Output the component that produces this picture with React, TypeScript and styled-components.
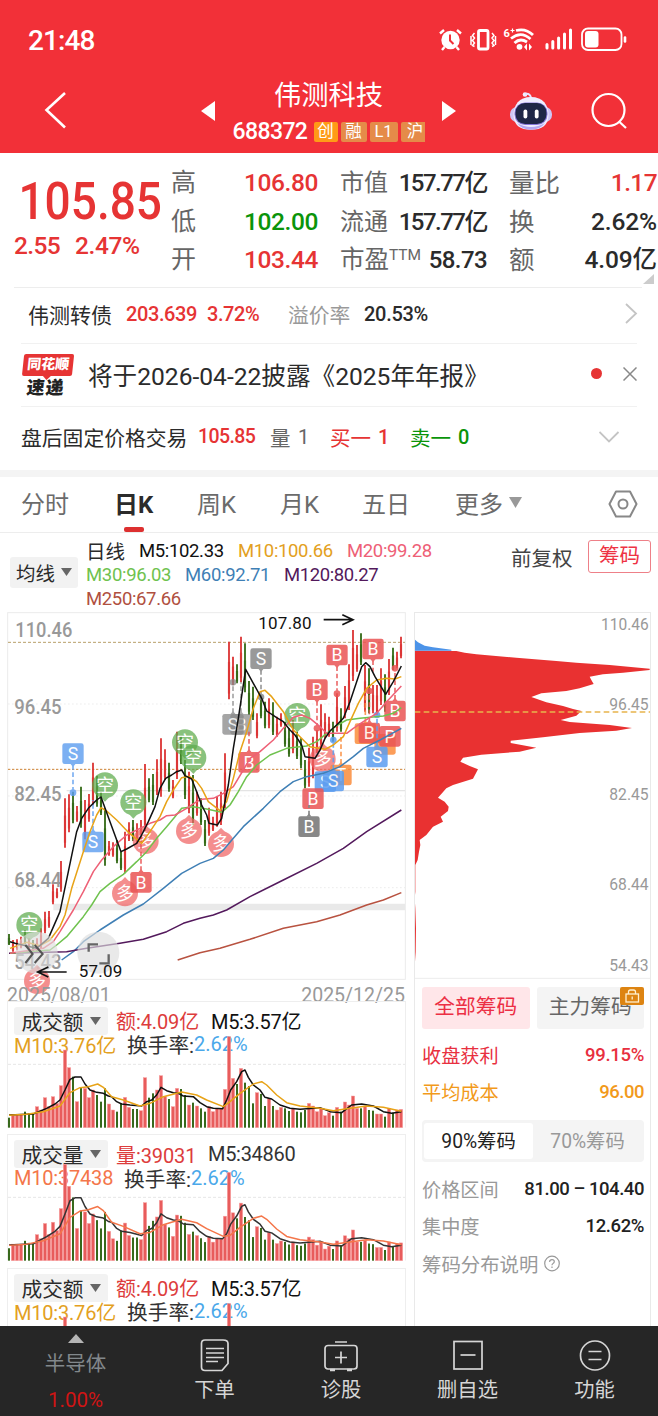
import React from "react";
import styled, { createGlobalStyle } from "styled-components";

const GlobalStyle = createGlobalStyle`
  * {
    box-sizing: border-box;
  }

  body {
    margin: 0;
    background: #fff;
    font-family: Roboto, "Noto Sans CJK SC", sans-serif;
  }

  svg {
    display: block;
    flex-shrink: 0;
  }
`;

const RED = "#e63434";
const GREEN = "#0a940a";
const INK = "#2b2b2b";
const GREY = "#999";

const Page = styled.div`
  width: 658px;
  height: 1416px;
  overflow: hidden;
  display: flex;
  flex-direction: column;
  background: #fff;
`;

const Header = styled.header`
  height: 153px;
  flex-shrink: 0;
  background: #f23038;
  color: #fff;
`;

const StatusBar = styled.div`
  height: 80px;
  padding: 0 31px 0 28px;
  display: flex;
  align-items: center;
  justify-content: space-between;
`;

const TitleBar = styled.div`
  height: 62px;
  display: flex;
  align-items: center;
`;

const BackButton = styled.div`
  width: 201px;
  padding-left: 44px;
`;

const TitleStack = styled.div`
  width: 227px;
  display: flex;
  flex-direction: column;
  align-items: center;
  gap: 10px;
`;

const Title = styled.div`
  padding-top: 1px;
  font-size: 27.3px;
  line-height: 30px;
`;

const CodeRow = styled.div`
  width: 192px;
  height: 22px;
  display: flex;
  align-items: center;
`;

const TagStrip = styled.div`
  width: 111px;
  display: flex;
  gap: 3px;
  overflow: hidden;
`;

const Tag = styled.span<{ $w: number; $bright?: boolean }>`
  width: ${(p) => p.$w}px;
  height: 20px;
  flex-shrink: 0;
  border-radius: 2px;
  background: ${(p) => (p.$bright ? "#ff9b17" : "#e58b49")};
  font-size: 16.5px;
  line-height: 19px;
  text-align: center;
  white-space: nowrap;
`;

const HeaderIcon = styled.div<{ $gap: number }>`
  margin-left: ${(p) => p.$gap}px;
`;

/* one run of text; $w fixes the space it takes in its row */
const Text = styled.span<{
  $size: number;
  $color?: string;
  $w?: number;
  $weight?: number;
  $track?: number;
}>`
  display: inline-block;
  flex-shrink: 0;
  white-space: nowrap;
  font-size: ${(p) => p.$size}px;
  color: ${(p) => p.$color || "inherit"};
  width: ${(p) => (p.$w ? p.$w + "px" : "auto")};
  font-weight: ${(p) => p.$weight || 400};
  letter-spacing: ${(p) => p.$track || 0}px;
`;

const Quote = styled.section`
  height: 134px;
  display: flex;
  flex-shrink: 0;
  position: relative;
`;

const PriceColumn = styled.div`
  width: 171px;
  padding: 27px 0 0 14px;
  color: ${RED};
`;

const Price = styled.div`
  width: 165px;
  padding-left: 5px;
  font-size: 52px;
  font-weight: 500;
  line-height: 44px;
  transform: scaleX(0.885);
  transform-origin: left;
`;

const Change = styled.div`
  margin-top: 8px;
  display: flex;
  line-height: 28px;
`;

const StatGroup = styled.div`
  width: 147px;
  margin-right: 22px;
  padding-top: 11px;

  &:last-of-type {
    margin-right: 0;
    width: 148px;
  }
`;

const Stat = styled.div`
  height: 38.5px;
  display: flex;
  align-items: center;
  justify-content: space-between;
  line-height: 38px;

  sup {
    font-size: 15.5px;
    line-height: 0;
    vertical-align: 8px;
  }
`;

const Fold = styled.svg`
  position: absolute;
  right: 4px;
  bottom: 3px;
`;

const InfoRow = styled.div<{ $h: number; $inset: number; $pad: number }>`
  height: ${(p) => p.$h}px;
  flex-shrink: 0;
  margin: 0 ${(p) => (p.$inset === 14 ? 16 : 21)}px 0 ${(p) => p.$inset}px;
  padding: 0 0 3px ${(p) => p.$pad}px;
  border-top: 1px solid #ededed;
  display: flex;
  align-items: center;
`;

const PlainRow = styled(InfoRow)`
  border-top-color: #f1f1f1;
`;

const Spacer = styled.div`
  flex: 1;
`;

const Badge = styled.div`
  width: 50px;
  margin: 2px 16px 0 1px;
  transform: skewX(-6deg);
  text-align: center;
  font-weight: 900;
`;

const BadgeTop = styled.div`
  height: 22px;
  position: relative;
  border-radius: 2px;
  background: ${RED};
  color: #fff;
  font-size: 14px;
  line-height: 21px;

  &::after {
    content: "";
    position: absolute;
    left: 21px;
    top: 22px;
    border: 4px solid transparent;
    border-top-color: ${RED};
    border-bottom: 0;
  }
`;

const BadgeBottom = styled.div`
  height: 20px;
  color: #222;
  font-size: 18px;
  line-height: 23px;
  letter-spacing: 1px;
`;

const Dot = styled.div`
  width: 11px;
  height: 11px;
  margin-right: 21px;
  border-radius: 50%;
  background: ${RED};
`;

const Band = styled.div`
  height: 7px;
  flex-shrink: 0;
  background: #f4f4f4;
`;

const Tabs = styled.nav`
  height: 56px;
  flex-shrink: 0;
  padding-left: 21px;
  border-bottom: 1px solid #ededed;
  display: flex;
  align-items: center;
  color: #666;
`;

const Tab = styled.div<{ $w: number; $active?: boolean }>`
  width: ${(p) => p.$w}px;
  height: 55px;
  padding-bottom: 3px;
  position: relative;
  display: flex;
  align-items: center;
  gap: 6px;
  font-size: 24px;
  white-space: nowrap;
  color: ${(p) => (p.$active ? INK : "#6b6b6b")};
  font-weight: ${(p) => (p.$active ? 700 : 400)};

  &::after {
    content: "";
    display: ${(p) => (p.$active ? "block" : "none")};
    position: absolute;
    left: 10px;
    bottom: 0;
    width: 20px;
    height: 5px;
    border-radius: 2px;
    background: #dd3030;
  }
`;

const Legend = styled.div`
  height: 79px;
  flex-shrink: 0;
  padding: 5px 7px 0 10px;
  display: flex;
  align-items: flex-start;
`;

const Pill = styled.div<{ $w: number; $h: number; $size: number }>`
  width: ${(p) => p.$w}px;
  height: ${(p) => p.$h}px;
  flex-shrink: 0;
  display: flex;
  align-items: center;
  justify-content: center;
  gap: 6px;
  border-radius: 3px;
  background: #f2f2f2;
  color: ${INK};
  font-size: ${(p) => p.$size}px;
`;

const MaPill = styled(Pill)`
  margin: 19px 8px 0 0;
`;

const MaLines = styled.div`
  width: 425px;
  padding-top: 1px;
`;

const MaLine = styled.div`
  height: 24px;
  display: flex;
  align-items: center;
`;

const ChipButton = styled.div`
  width: 63px;
  height: 33px;
  margin-top: 2px;
  border: 1px solid #ee8088;
  border-radius: 3px;
  color: #ee3344;
  font-size: 20.5px;
  line-height: 30px;
  text-align: center;
`;

const Adjust = styled.div`
  width: 77px;
  margin-top: 6px;
  font-size: 20.5px;
  line-height: 30px;
  color: #444;
`;

const Body = styled.main`
  height: 714px;
  flex-shrink: 0;
  display: flex;
  overflow: hidden;
`;

const ChartColumn = styled.div`
  width: 414px;
`;

const Dates = styled.div`
  height: 19px;
  margin-top: -14px;
  padding: 0 9px 0 7px;
  display: flex;
  justify-content: space-between;
  line-height: 27px;
`;

const VolumePanel = styled.section`
  width: 398.5px;
  height: 127px;
  margin: 0 0 6.5px 7px;
  position: relative;
  border: 1px solid #eee;
  border-bottom-color: transparent;
`;

const VolumeChart = styled.svg`
  position: absolute;
  left: -8px;
  top: 0;
`;

const VolumeHead = styled.div`
  padding: 5px 0 0 6px;
`;

const VolumeLine = styled.div`
  display: flex;
  align-items: center;
  height: 28px;

  & + & {
    height: 19px;
  }
`;

const ChipColumn = styled.aside`
  width: 237px;
  border: 1px solid #e9e9e9;
  border-bottom: 0;
`;

const ChipPanel = styled.div`
  padding: 7px 6px 0 7px;
`;

const ButtonPair = styled.div`
  display: flex;
  justify-content: space-between;
`;

const ChipTab = styled.div<{ $active?: boolean }>`
  width: 107.5px;
  height: 42px;
  position: relative;
  border-radius: 3px;
  background: ${(p) => (p.$active ? "#ffe6e9" : "#f4f4f4")};
  color: ${(p) => (p.$active ? "#ec2f44" : "#666")};
  font-size: 20.7px;
  line-height: 41px;
  text-align: center;
`;

const Lock = styled.svg`
  position: absolute;
  right: 0;
  top: 0;
`;

const DataRow = styled.div`
  height: 37px;
  display: flex;
  align-items: center;
  justify-content: space-between;
`;

const DataBlock = styled.div<{ $top: number }>`
  margin-top: ${(p) => p.$top}px;
`;

const Segment = styled.div`
  height: 42px;
  margin-top: 9px;
  padding: 3px 2px;
  display: flex;
  border-radius: 4px;
  background: #f4f4f4;
`;

const SegmentItem = styled.div<{ $active?: boolean }>`
  flex: 1;
  border-radius: 3px;
  background: ${(p) => (p.$active ? "#fff" : "transparent")};
  color: ${(p) => (p.$active ? "#222" : GREY)};
  font-size: 19.3px;
  line-height: 37px;
  text-align: center;
`;

const BottomBar = styled.footer`
  height: 90px;
  flex-shrink: 0;
  display: flex;
  background: #262626;
  color: #d6d6d6;
`;

const NavItem = styled.div<{ $w: number }>`
  width: ${(p) => p.$w}px;
  padding-top: 13px;
  display: flex;
  flex-direction: column;
  align-items: center;
  font-size: 20.3px;
  line-height: 30px;

  svg {
    margin-bottom: 3px;
  }
`;

const Sector = styled.div`
  width: 151px;
  padding-top: 8px;
  display: flex;
  flex-direction: column;
  align-items: center;
  color: #82888c;
  line-height: 30px;

  svg {
    margin-bottom: 6px;
  }
`;

const SectorChange = styled.div`
  margin-top: 6px;
  color: #d01414;
  font-size: 20.5px;
`;

/* ---------- chart data, three units to a pixel ---------- */

type Candle = [number, number, boolean?];

// [high, low, falling]
const candles: Candle[] = [
  [987, 1020, true], [1005, 1040], [1003, 1036], [995, 1030], [975, 1018, true],
  [1000, 1040], [1005, 1040, true], [1000, 1040], [970, 1030], [920, 985],
  [918, 968], [838, 898], [850, 880], [768, 860], [580, 728],
  [568, 682], [560, 655, true], [603, 650], [545, 668, true], [585, 703],
  [567, 650], [473, 600], [512, 605, true], [562, 630, true], [610, 782, true],
  [708, 752], [712, 755], [705, 775, true], [740, 795, true], [680, 805],
  [652, 708], [645, 708, true], [655, 715], [645, 720], [477, 680],
  [520, 592, true], [507, 600, true], [463, 570], [400, 575], [433, 525],
  [473, 560, true], [525, 580], [380, 522], [395, 477, true], [465, 582, true],
  [500, 625], [510, 660, true], [560, 632], [580, 660, true], [645, 723, true],
  [608, 692], [635, 678], [575, 665], [560, 660], [445, 610],
  [110, 283], [155, 240], [178, 235, true], [95, 232], [115, 262, true],
  [228, 330, true], [245, 345, true], [325, 400], [270, 340, true], [290, 370, true],
  [280, 370], [292, 390, true], [335, 395], [325, 365], [350, 425, true],
  [370, 455, true], [345, 445], [380, 462, true], [400, 490, true], [465, 550, true],
  [428, 545], [395, 520], [375, 450], [298, 430], [325, 400],
  [335, 395], [350, 410, true], [265, 380], [310, 380, true], [243, 340],
  [178, 315], [75, 228], [120, 200], [85, 180, true], [180, 320],
  [190, 325, true], [240, 325], [240, 330], [190, 300], [208, 320, true],
  [162, 270], [128, 195, true], [140, 190], [95, 160],
];

const averages = [
  { color: "#3f7fb5", pts: "185,1065 220,1040 250,1010 300,975 370,930 430,897 490,850 545,805 600,775 640,760 670,735 700,700 730,665 790,610 840,560 880,530 920,515 970,505 1020,485 1060,455 1090,430 1140,405 1204,370" },
  { color: "#53195c", pts: "27,1045 200,1040 260,1030 360,1015 430,1003 500,980 550,955 600,940 640,930 680,915 750,875 850,825 950,775 1030,730 1100,680 1204,615" },
  { color: "#b85240", pts: "533,1065 600,1043 660,1030 750,1003 850,970 950,950 1020,930 1100,900 1150,885 1204,863" },
  { color: "#6fc24e", pts: "30,1045 150,1035 170,1020 200,995 225,965 250,935 275,900 300,860 330,835 370,808 410,770 440,740 470,700 500,665 525,635 545,610 580,605 620,612 665,622 690,600 715,560 740,515 770,480 810,450 860,430 920,423 950,410 980,385 1010,362 1040,345 1080,340 1150,333 1180,325 1204,308" },
  { color: "#ee6076", pts: "30,1045 130,1030 160,1010 180,980 220,915 250,860 280,800 305,765 340,725 380,690 420,670 450,655 480,645 500,632 525,630 560,610 590,590 605,583 640,580 670,565 700,545 730,495 750,460 780,440 820,405 850,370 880,337 905,330 930,340 960,365 980,385 1010,385 1040,385 1060,370 1090,350 1130,325 1160,290 1204,243" },
  { color: "#e8a317", pts: "30,1030 80,1012 120,1022 150,1005 180,965 195,930 215,850 250,740 270,680 290,630 303,608 320,618 350,645 385,682 425,715 450,680 480,635 500,590 520,555 545,518 568,514 590,530 605,550 625,590 660,617 680,590 700,520 720,440 740,380 760,310 780,260 795,256 815,275 850,320 880,375 930,425 975,433 1000,420 1030,395 1050,350 1075,295 1100,250 1130,225 1160,220 1185,222 1204,215" },
  { color: "#111", pts: "30,1010 45,1015 110,1030 145,1000 180,920 205,800 230,680 245,640 265,610 290,585 303,576 330,650 363,740 380,732 410,715 425,690 445,650 465,605 480,550 497,520 515,510 530,500 545,495 555,512 575,522 590,560 605,600 620,630 627,655 652,660 665,640 685,540 700,430 715,340 737,193 760,235 785,280 800,318 830,338 850,350 870,375 885,390 905,420 915,455 945,460 960,435 975,400 990,378 1010,360 1030,340 1050,290 1070,230 1085,185 1097,173 1110,185 1125,215 1157,268 1180,230 1204,183" },
];

const chipProfile =
  "15,137 140,138 165,143 200,148 320,158 440,168 500,173 600,180 720,191 720,195 640,203 580,208 540,215 545,225 552,237 510,250 470,258 395,265 365,276 410,292 460,303 490,312 515,318 500,332 453,345 480,351 600,360 667,369 620,377 510,384 400,397 303,407 303,414 380,428 330,440 215,449 160,458 152,470 180,483 205,493 190,521 130,540 110,550 85,578 105,590 117,605 115,618 93,635 100,650 70,665 50,690 30,705 32,720 28,740 24,765 17,780 17,860 15,880 17,910 19,970 18,1040 15,1085";

// height above the base line for each day
const volumes = [
  30, 40, 40, 40, 48, 43, 41, 63, 53, 90, 63, 93, 73, 126, 233, 180, 153, 78, 121, 118,
  90, 113, 98, 78, 118, 71, 53, 48, 73, 91, 61, 56, 56, 51, 150, 90, 103, 113, 156, 93,
  86, 63, 118, 116, 98, 68, 75, 65, 58, 48, 63, 48, 58, 56, 115, 273, 148, 131, 178, 135,
  125, 73, 105, 101, 65, 88, 65, 53, 61, 58, 50, 58, 48, 46, 53, 73, 65, 48, 58, 36,
  45, 36, 61, 48, 77, 68, 95, 58, 58, 63, 53, 51, 41, 41, 33, 58, 45, 53, 55,
];
const volumeFalls = [
  0, 4, 5, 6, 16, 18, 22, 23, 24, 27, 28, 31, 32, 35, 36, 40, 43, 44, 46, 48, 49, 57, 59,
  60, 61, 63, 64, 66, 69, 70, 72, 73, 74, 81, 83, 88, 90, 91, 94, 96,
];
const volumeFast: number[][] = [
  [27, 345], [100, 342], [140, 325], [165, 312], [180, 300], [195, 270], [210, 238], [225, 231],
  [243, 231], [255, 252], [270, 270], [290, 277], [310, 280], [325, 288], [335, 290], [350, 305],
  [365, 312], [390, 315], [425, 318], [440, 305], [455, 300], [470, 285], [483, 262], [500, 272],
  [520, 278], [535, 280], [550, 288], [580, 290], [600, 308], [620, 320], [640, 325], [668, 326],
  [680, 300], [692, 270], [710, 245], [725, 215], [735, 210], [745, 232], [760, 255], [780, 270],
  [795, 292], [815, 297], [840, 315], [870, 325], [900, 328], [960, 323], [990, 335], [1025, 338],
  [1055, 315], [1085, 312], [1120, 318], [1150, 335], [1175, 340], [1204, 335],
];
const volumeSlow: number[][] = [
  [27, 346], [80, 343], [130, 335], [180, 318], [210, 278], [240, 263], [265, 260], [293, 252],
  [310, 262], [335, 290], [370, 300], [420, 318], [450, 310], [490, 290], [545, 276], [590, 285],
  [620, 300], [670, 320], [690, 305], [720, 280], [760, 252], [785, 245], [800, 255], [830, 285],
  [860, 308], [900, 318], [960, 325], [1000, 332], [1050, 325], [1100, 318], [1150, 322], [1204, 334],
];

/* ---------- small drawings ---------- */

const Caret = ({ w = 11, h = 8, color = "#666" }) => (
  <svg width={w} height={h} viewBox="0 0 10 8" preserveAspectRatio="none">
    <path d="M0 0H10L5 8Z" fill={color} />
  </svg>
);

const StatusIcons = () => (
  <svg width="190" height="28" viewBox="437 26 190 28" fill="none" stroke="#fff">
    <circle cx="450.5" cy="40" r="9.2" fill="#fff" stroke="none" />
    <path d="M450 34.5V40.5L453.5 44" stroke="#f23038" strokeWidth="2" />
    <path d="M440 33.500L444 30M461 33.500L457 30M444.500 47L442 50M456.500 47L459 50" strokeWidth="2.4" />
    <rect x="478.500" y="30.500" width="9.500" height="18.500" rx="1.500" strokeWidth="2.800" />
    <path d="M474.500 33l-2 2.500 2 2.500-2 2.500 2 2.500-2 2.500 2 1M492 33l2 2.500-2 2.500 2 2.500-2 2.500 2 2.500-2 1M471 36v9M495.500 36v9" strokeWidth="1.500" />
    <text x="503.500" y="37" fontSize="11" fontWeight="700" fill="#fff" stroke="none">6</text>
    <path d="M510.500 30.500h4M512.500 28.500v4" strokeWidth="1.200" />
    <path d="M516 30.500Q526 28 533 35M511 38.500Q521 30.500 530.500 39M514.500 43Q520 37.500 527 42" strokeWidth="2.800" />
    <circle cx="519.500" cy="46.800" r="2.900" fill="#fff" stroke="none" />
    <path d="M527 43.500l-3 3.500 3 3.500zM529 43.500l3 3.500-3 3.500z" fill="#fff" stroke="none" />
    <path d="M547 44.500V48M552.800 41.500V48M558.600 38V48M564.500 34V48M570.500 30V48" strokeWidth="3" strokeLinecap="round" />
    <rect x="582" y="28.500" width="39.500" height="21.500" rx="6" strokeWidth="1.800" />
    <rect x="585" y="31" width="13.500" height="16.500" rx="3" fill="#fff" stroke="none" />
    <path d="M625 37.500v4" strokeWidth="2.600" strokeLinecap="round" />
  </svg>
);

const Robot = () => (
  <svg width="42" height="40" viewBox="0 0 42 40">
    <circle cx="15" cy="3.500" r="2.300" fill="#f1efff" />
    <path d="M15 3Q21 2 21 8" stroke="#e8e4ff" strokeWidth="2" fill="none" />
    <rect x="0" y="16" width="42" height="15" rx="7" fill="#cfc6f6" />
    <path d="M21 6C33 6 38.500 14 38.500 24C38.500 34 32 38.800 21 38.800C10 38.800 3.500 34 3.500 24C3.500 14 9 6 21 6Z" fill="#efedff" />
    <path d="M7 32Q21 40 35 32Q30 38.800 21 38.800Q12 38.800 7 32Z" fill="#b3a8f2" />
    <rect x="4.500" y="11.500" width="33" height="22.500" rx="10.500" fill="#8577d8" />
    <rect x="5.500" y="12" width="31" height="21" rx="9.500" fill="#1f2747" />
    <rect x="13.500" y="18.500" width="3.800" height="9" rx="1.900" fill="#fff" />
    <rect x="24.800" y="18.500" width="3.800" height="9" rx="1.900" fill="#fff" />
  </svg>
);

const markerColors = { blue: "#5c9df0", red: "#ea5454", grey: "#888", orange: "#fb8c3c" };

type MarkProps = {
  x: number;
  y: number;
  label?: string;
  tone: keyof typeof markerColors;
  to?: number;
  dot?: boolean;
  o?: number;
};

// buy / sell square with an optional dashed stem towards its candle
const Mark = ({ x, y, label, tone, to, dot, o = 0.85 }: MarkProps) => {
  const color = markerColors[tone];
  const side = to && to < y ? -1 : 1;
  return (
    <g opacity={o}>
      {to && (
        <>
          <path d={`M${x} ${y + side * 34}V${to}`} stroke={color} strokeWidth="5" strokeDasharray="14 8" />
          <path d={`M${x - 8} ${y + side * 30}h16l-8 ${side * 10}z`} fill={color} />
        </>
      )}
      {dot && to && <circle cx={x} cy={to} r="10" fill={color} />}
      <rect x={x - 32} y={y - 31} width="64" height="62" rx="7" fill={color} />
      <text x={x} y={y + 19} fontSize="53" fill="#fff" textAnchor="middle">{label}</text>
    </g>
  );
};

const Balloon = ({ x, y, up }: { x: number; y: number; up?: boolean }) => (
  <g opacity="0.72">
    <circle cx={x} cy={y} r="39" fill={up ? "#f06464" : "#5dab4c"} />
    <path d={up ? `M${x - 13} ${y - 35}h26l-13 -14z` : `M${x - 13} ${y + 35}h26l-13 14z`} fill={up ? "#f06464" : "#5dab4c"} />
    <text x={x} y={y + 19} fontSize="54" fill="#fff" textAnchor="middle">{up ? "多" : "空"}</text>
  </g>
);

const PriceChart = () => (
  <svg width="414" height="384" viewBox="0 21 1242 1152" fill="none">
    <rect x="23" y="23" width="1193" height="1100" stroke="#ebebeb" strokeWidth="3" />
    <path d="M24 297H1215M24 573H1215M24 848H1215" stroke="#ededed" strokeWidth="3" strokeDasharray="5 7" />
    <path d="M200 557H1215" stroke="#e4e4e4" strokeWidth="4" />
    <path d="M160 906H1215" stroke="#e9e9e9" strokeWidth="19" />
    <path d="M24 112H1215" stroke="#b9a06a" strokeWidth="3" strokeDasharray="9 6" />
    <path d="M24 493H1215" stroke="#cd8234" strokeWidth="3" strokeDasharray="7 5" />
    <g fill="#999" fontSize="59" fontWeight="500">
      <text x="46" y="97" textLength="171" lengthAdjust="spacingAndGlyphs">110.46</text>
      <text x="43" y="327" textLength="142" lengthAdjust="spacingAndGlyphs">96.45</text>
      <text x="43" y="588" textLength="142" lengthAdjust="spacingAndGlyphs">82.45</text>
      <text x="43" y="847" textLength="142" lengthAdjust="spacingAndGlyphs">68.44</text>
      <text x="43" y="1092" textLength="142" lengthAdjust="spacingAndGlyphs">54.43</text>
    </g>
    {candles.map(([high, low, falling], i) => (
      <g key={i} stroke={falling ? "#356b18" : "#dc3636"}>
        <path d={`M${27 + i * 12} ${high}V${low}`} strokeWidth="5.5" />
        <path d={`M${27 + i * 12} ${high + (low - high) * 0.35}V${low - (low - high) * 0.1}`} strokeWidth="6.5" />
      </g>
    ))}
    <Balloon x={88} y={960} />
    <Balloon x={315} y={541} />
    <Balloon x={400} y={592} />
    <Balloon x={555} y={412} />
    <Balloon x={580} y={458} />
    <Balloon x={892} y={333} />
    <Balloon x={111} y={1128} up />
    <Balloon x={375} y={865} up />
    <Balloon x={437} y={708} up />
    <Balloon x={567} y={678} up />
    <Balloon x={663} y={717} up />
    <Balloon x={968} y={462} up />
    <Mark x={219} y={446} label="S" tone="blue" to={563} dot o={0.8} />
    <Mark x={279} y={711} label="S" tone="blue" to={585} o={0.8} />
    <Mark x={423} y={832} label="B" tone="red" to={720} />
    <Mark x={783} y={161} label="S" tone="grey" to={276} dot />
    <Mark x={723} y={358} label="B" tone="grey" to={232} o={0.7} />
    <Mark x={699} y={358} label="S" tone="grey" to={232} dot o={0.75} />
    <Mark x={747} y={472} label="B" tone="red" to={380} />
    <Mark x={951} y={254} label="B" tone="red" to={370} dot />
    <Mark x={1011} y={150} label="B" tone="red" to={266} dot />
    <Mark x={1119} y={132} label="B" tone="red" to={200} />
    <Mark x={1023} y={510} label="T" tone="orange" to={395} />
    <Mark x={976} y={530} label="S" tone="blue" />
    <Mark x={1000} y={528} label="S" tone="blue" to={405} dot />
    <Mark x={939} y={581} label="B" tone="red" />
    <Mark x={927} y={665} label="B" tone="grey" to={600} o={1} />
    <Mark x={1155} y={418} tone="orange" />
    <Mark x={1096} y={386} tone="orange" to={260} />
    <Mark x={1108} y={384} label="B" tone="red" to={258} dot />
    <Mark x={1170} y={394} label="P" tone="red" />
    <Mark x={1131} y={456} label="S" tone="blue" to={330} dot />
    <Mark x={1185} y={318} label="B" tone="red" to={190} dot />
    {averages.map((line) => (
      <polyline key={line.color} points={line.pts} stroke={line.color} strokeWidth="4.5" strokeLinejoin="round" />
    ))}
    <g fill="#ddd" fillOpacity="0.65">
      <circle cx="110" cy="1043" r="63" />
      <circle cx="295" cy="1043" r="63" />
    </g>
    <path d="M76 1020l22 27-22 27M104 1020l24 27-24 27" stroke="#555" strokeWidth="6" />
    <path d="M266 1040v-22h28M326 1048v27h-28" stroke="#666" strokeWidth="7" />
    <g stroke="#111" strokeWidth="5">
      <path d="M971 44H1058M1027 29l32 15-32 15" />
      <path d="M200 1101H115M145 1086l-32 15 32 15" />
    </g>
    <g fill="#111" fontSize="51">
      <text x="775" y="73" textLength="160">107.80</text>
      <text x="236" y="1117" textLength="131">57.09</text>
    </g>
  </svg>
);

const ChipChart = () => (
  <svg width="235" height="367" viewBox="16 24 705 1101" fill="none">
    <polygon points={chipProfile} fill="#e93131" />
    <path d="M15 103L25 112L45 122L70 127L125 134V137H15Z" fill="#4c93e8" />
    <path d="M15 321H722" stroke="#e8b44c" strokeWidth="4" strokeDasharray="17 10" />
    <path d="M15 1120H722" stroke="#ececec" strokeWidth="3" />
    <g fill="#999" fontSize="49">
      <text x="574" y="74" textLength="143" lengthAdjust="spacingAndGlyphs">110.46</text>
      <text x="599" y="315" textLength="118" lengthAdjust="spacingAndGlyphs">96.45</text>
      <text x="599" y="586" textLength="118" lengthAdjust="spacingAndGlyphs">82.45</text>
      <text x="599" y="856" textLength="118" lengthAdjust="spacingAndGlyphs">68.44</text>
      <text x="599" y="1097" textLength="118" lengthAdjust="spacingAndGlyphs">54.43</text>
    </g>
  </svg>
);

// the share volume runs a little above turnover in the first half of the window
const shareFactor = (x: number) => {
  if (x < 425) return 1.24;
  if (x < 680) return 1.16;
  return 0.97;
};

const Volume = ({ shares }: { shares?: boolean }) => {
  const factor = (x: number) => (shares ? shareFactor(x) : 1);
  const points = (list: number[][]) =>
    list.map(([x, y]) => `${x},${383 - (383 - y) * factor(x)}`).join(" ");
  return (
    <VolumeChart width="414" height="127" viewBox="0 6 1242 381" fill="none">
      <path d="M24 193H1215" stroke="#e6e6e6" strokeWidth="3" strokeDasharray="9 6" />
      {volumes.map((v, i) => {
        const x = 27 + i * 12;
        const h = v * factor(x);
        const falling = volumeFalls.includes(i);
        return falling ? (
          <rect key={i} x={x - 3} y={383 - h} width="6" height={h} fill="#38691c" />
        ) : (
          <rect key={i} x={x - 5} y={383 - h} width="10" height={h} fill="#e85c5c" stroke="#f9a3a3" strokeWidth="1.500" />
        );
      })}
      <polyline points={points(volumeFast)} stroke={shares ? "#333" : "#111"} strokeWidth="4.500" strokeLinejoin="round" />
      <polyline points={points(volumeSlow)} stroke={shares ? "#f4764a" : "#e8a317"} strokeWidth="4.500" strokeLinejoin="round" />
    </VolumeChart>
  );
};

const VolumeSection = ({ shares }: { shares?: boolean }) => (
  <VolumePanel>
    <VolumeHead>
      <VolumeLine>
        <Pill $w={94} $h={28} $size={20.7}>
          {shares ? "成交量" : "成交额"}
          <Caret />
        </Pill>
        <Spacer style={{ flex: "0 0 8px" }} />
        <Text $size={20} $w={shares ? 92 : 95} $color="#dd3c3c" $track={-0.1}>
          {shares ? "量:39031" : "额:4.09亿"}
        </Text>
        <Text $size={20} $color={shares ? "#333" : "#111"} $track={-0.3}>
          {shares ? "M5:34860" : "M5:3.57亿"}
        </Text>
      </VolumeLine>
      <VolumeLine>
        <Text $size={20} $w={shares ? 110 : 113} $color={shares ? "#f4764a" : "#e3a021"} $track={-0.2}>
          {shares ? "M10:37438" : "M10:3.76亿"}
        </Text>
        <Text $size={20.7} $color="#333">换手率:</Text>
        <Text $size={20} $color="#4aa8ea">2.62%</Text>
      </VolumeLine>
    </VolumeHead>
    <Volume shares={shares} />
  </VolumePanel>
);

const navIcons = {
  order: (
    <>
      <path d="M5 1.500H23Q28 1.500 28 5V25L22 32H5Q1.500 32 1.500 28.500V5Q1.500 1.500 5 1.500Z" />
      <path d="M6 10H24M6 14.500H24M6 19H24M6 23H18" />
    </>
  ),
  diagnose: (
    <>
      <rect x="-1" y="7" width="32" height="23.500" rx="3" />
      <path d="M9 3.500H21M15 13V25M9 19H21" />
      <path d="M4 31.500H9M21 31.500H26" strokeWidth="2.500" />
    </>
  ),
  remove: (
    <>
      <rect x="1" y="3" width="28" height="27.500" />
      <path d="M7.500 16.500H22.500" />
    </>
  ),
  more: (
    <>
      <circle cx="15" cy="17" r="14.500" />
      <path d="M8.500 13H21.500M8.500 21H21.500" />
    </>
  ),
};

const NavIcon = ({ name }: { name: keyof typeof navIcons }) => (
  <svg width="34" height="33" viewBox="-2 0.500 34 33" fill="none" stroke="#d6d6d6" strokeWidth="1.700">
    {navIcons[name]}
  </svg>
);

const App: React.FC = () => {
  return (
    <Page>
      <GlobalStyle />
      <Header>
        <StatusBar>
          <Text $size={28} $weight={500} $track={-0.9}>21:48</Text>
          <StatusIcons />
        </StatusBar>
        <TitleBar>
          <BackButton>
            <svg width="23" height="38" viewBox="0 0 23 38" fill="none" stroke="#fff" strokeWidth="2.600">
              <path d="M21 1L2.500 18L21 35.500" />
            </svg>
          </BackButton>
          <svg width="14" height="20" viewBox="0 0 14 20"><path d="M14 0V20L0 10Z" fill="#fff" /></svg>
          <TitleStack>
            <Title>伟测科技</Title>
            <CodeRow>
              <Text $size={23} $w={81} $weight={500} $track={-0.6}>688372</Text>
              <TagStrip>
                <Tag $w={24} $bright>创</Tag>
                <Tag $w={26}>融</Tag>
                <Tag $w={28}>L1</Tag>
                <Tag $w={29}>沪</Tag>
              </TagStrip>
            </CodeRow>
          </TitleStack>
          <svg width="14" height="20" viewBox="0 0 14 20"><path d="M0 0V20L14 10Z" fill="#fff" /></svg>
          <HeaderIcon $gap={54}><Robot /></HeaderIcon>
          <HeaderIcon $gap={38}>
            <svg width="38" height="38" viewBox="0 0 38 38" fill="none" stroke="#fff" strokeWidth="2.200">
              <circle cx="18.500" cy="18" r="16" />
              <path d="M29 29.500L36 36" />
            </svg>
          </HeaderIcon>
        </TitleBar>
      </Header>

      <Quote>
        <PriceColumn>
          <Price>105.85</Price>
          <Change>
            <Text $size={24.5} $w={61} $weight={500} $track={-0.6}>2.55</Text>
            <Text $size={24.5} $weight={500} $track={-0.4}>2.47%</Text>
          </Change>
        </PriceColumn>
        <StatGroup>
          <Stat><Text $size={25} $color="#666">高</Text><Text $size={24.5} $color={RED} $weight={500} $track={-0.4}>106.80</Text></Stat>
          <Stat><Text $size={25} $color="#666">低</Text><Text $size={24.5} $color={GREEN} $weight={500} $track={-0.4}>102.00</Text></Stat>
          <Stat><Text $size={25} $color="#666">开</Text><Text $size={24.5} $color={RED} $weight={500} $track={-0.4}>103.44</Text></Stat>
        </StatGroup>
        <StatGroup>
          <Stat><Text $size={24} $color="#666">市值</Text><Text $size={24} $color={INK} $weight={500} $track={-1.5}>157.77亿</Text></Stat>
          <Stat><Text $size={24} $color="#666">流通</Text><Text $size={24} $color={INK} $weight={500} $track={-1.5}>157.77亿</Text></Stat>
          <Stat><Text $size={24.5} $color="#666">市盈<sup>TTM</sup></Text><Text $size={24} $color={INK} $weight={500} $track={-0.6}>58.73</Text></Stat>
        </StatGroup>
        <StatGroup>
          <Stat><Text $size={25.5} $color="#666">量比</Text><Text $size={24.5} $color={RED} $weight={500} $track={-0.6}>1.17</Text></Stat>
          <Stat><Text $size={25.5} $color="#666">换</Text><Text $size={24.5} $color={INK} $weight={500} $track={-0.1}>2.62%</Text></Stat>
          <Stat><Text $size={25.5} $color="#666">额</Text><Text $size={24.5} $color={INK} $weight={500} $track={-0.1}>4.09亿</Text></Stat>
        </StatGroup>
        <Fold width="11" height="10"><path d="M11 0V10H0Z" fill="#ccc" /></Fold>
      </Quote>

      <InfoRow $h={56} $inset={14} $pad={14}>
        <Text $size={21} $w={98} $color={INK}>伟测转债</Text>
        <Text $size={20} $w={81} $color={RED} $weight={500} $track={-0.4}>203.639</Text>
        <Text $size={20} $w={81} $color={RED} $weight={500} $track={-0.4}>3.72%</Text>
        <Text $size={20.8} $w={76} $color={GREY}>溢价率</Text>
        <Text $size={20} $color={INK} $weight={500} $track={-0.3}>20.53%</Text>
        <Spacer />
        <svg width="17" height="22" viewBox="0 0 17 22" fill="none" stroke="#c4c4c4" strokeWidth="1.800">
          <path d="M1 1L11 10.500L1 20" />
        </svg>
      </InfoRow>
      <PlainRow $h={63} $inset={21} $pad={0}>
        <Badge>
          <BadgeTop>同花顺</BadgeTop>
          <BadgeBottom>速递</BadgeBottom>
        </Badge>
        <Text $size={24.6} $color={INK}>将于2026-04-22披露《2025年年报》</Text>
        <Spacer />
        <Dot />
        <svg width="14" height="14" viewBox="0 0 14 14" stroke="#888" strokeWidth="1.500">
          <path d="M0.500 0.500L13.500 13.500M13.500 0.500L0.500 13.500" />
        </svg>
      </PlainRow>
      <PlainRow $h={63.5} $inset={21} $pad={0}>
        <Text $size={20.8} $w={177} $color={INK}>盘后固定价格交易</Text>
        <Text $size={19.5} $w={72} $color={RED} $track={-0.6} $weight={500}>105.85</Text>
        <Text $size={20.5} $w={28} $color="#666">量</Text>
        <Text $size={20} $w={32} $color="#666">1</Text>
        <Text $size={20.5} $w={48} $color={RED}>买一</Text>
        <Text $size={20} $w={32} $color={RED} $weight={500}>1</Text>
        <Text $size={20.5} $w={48} $color={GREEN}>卖一</Text>
        <Text $size={20} $color={GREEN} $weight={500}>0</Text>
        <Spacer />
        <svg width="38" height="12" viewBox="0 0 38 12" fill="none" stroke="#c4c4c4" strokeWidth="1.800">
          <path d="M0.500 1L10 10.500L19.500 1" />
        </svg>
      </PlainRow>
      <Band />

      <Tabs>
        <Tab $w={93}>分时</Tab>
        <Tab $w={83} $active>日K</Tab>
        <Tab $w={83}>周K</Tab>
        <Tab $w={82}>月K</Tab>
        <Tab $w={93}>五日</Tab>
        <Tab $w={153}>更多<Caret w={13} h={11} color="#999" /></Tab>
        <svg width="30" height="28" viewBox="0 0 30 28" fill="none" stroke="#888" strokeWidth="2">
          <path d="M8 1.500H22L28.500 14L22 26.500H8L1.500 14Z" strokeLinejoin="round" />
          <circle cx="15" cy="14" r="4.500" />
        </svg>
      </Tabs>

      <Legend>
        <MaPill $w={68} $h={31} $size={19.5}>均线<Caret /></MaPill>
        <MaLines>
          <MaLine>
            <Text $size={19.5} $w={53} $color={INK}>日线</Text>
            <Text $size={18.5} $w={99} $color="#111" $track={-0.35}>M5:102.33</Text>
            <Text $size={18.5} $w={109} $color="#e3a021" $track={-0.35}>M10:100.66</Text>
            <Text $size={18.5} $color="#ee6076" $track={-0.35}>M20:99.28</Text>
          </MaLine>
          <MaLine>
            <Text $size={18.5} $w={99} $color="#6fc24e" $track={-0.3}>M30:96.03</Text>
            <Text $size={18.5} $w={99} $color="#3f7fb5" $track={-0.3}>M60:92.71</Text>
            <Text $size={18.5} $color="#53195c" $track={-0.4}>M120:80.27</Text>
          </MaLine>
          <MaLine>
            <Text $size={18.5} $color="#b05040" $track={-0.35}>M250:67.66</Text>
          </MaLine>
        </MaLines>
        <Adjust>前复权</Adjust>
        <ChipButton>筹码</ChipButton>
      </Legend>

      <Body>
        <ChartColumn>
          <PriceChart />
          <Dates>
            <Text $size={19.5} $color={GREY}>2025/08/01</Text>
            <Text $size={19.5} $color={GREY}>2025/12/25</Text>
          </Dates>
          <VolumeSection />
          <VolumeSection shares />
          <VolumeSection />
        </ChartColumn>
        <ChipColumn>
          <ChipChart />
          <ChipPanel>
            <ButtonPair>
              <ChipTab $active>全部筹码</ChipTab>
              <ChipTab>
                主力筹码
                <Lock width="24" height="18" viewBox="0 0 24 18" fill="none" stroke="#fff0d0" strokeWidth="1.300">
                  <rect width="24" height="18" rx="2" fill="#dd8412" stroke="none" />
                  <rect x="6" y="7" width="12.500" height="8" />
                  <path d="M8.500 7V5Q8.500 3 10.500 3H13.500Q15.500 3 15.500 5V7M12.200 9.500V12.500" />
                </Lock>
              </ChipTab>
            </ButtonPair>
            <DataBlock $top={8}>
              <DataRow>
                <Text $size={19.2} $color="#e8303f">收盘获利</Text>
                <Text $size={18.5} $color="#e8303f" $weight={500} $track={-0.3}>99.15%</Text>
              </DataRow>
              <DataRow>
                <Text $size={19.2} $color="#f29a1b">平均成本</Text>
                <Text $size={18.5} $color="#f29a1b" $weight={500} $track={-0.5}>96.00</Text>
              </DataRow>
            </DataBlock>
            <Segment>
              <SegmentItem $active>90%筹码</SegmentItem>
              <SegmentItem>70%筹码</SegmentItem>
            </Segment>
            <DataBlock $top={9}>
              <DataRow>
                <Text $size={19.2} $color={GREY}>价格区间</Text>
                <Text $size={18.5} $color="#222" $weight={500} $track={-0.45}>81.00 – 104.40</Text>
              </DataRow>
              <DataRow>
                <Text $size={19.2} $color={GREY}>集中度</Text>
                <Text $size={18.5} $color="#222" $weight={500} $track={-0.4}>12.62%</Text>
              </DataRow>
              <DataRow>
                <Text $size={19.4} $color={GREY}>筹码分布说明</Text>
                <Spacer />
                <svg width="105" height="17" viewBox="0 0 105 17" fill="none" stroke="#999" strokeWidth="1.200">
                  <circle cx="13" cy="8.500" r="7.300" />
                  <path d="M10.500 6.800Q10.800 4.600 13 4.600Q15.300 4.600 15.300 6.600Q15.300 7.800 14 8.500Q13 9 13 10.300M13 11.600V12.900" />
                </svg>
              </DataRow>
            </DataBlock>
          </ChipPanel>
        </ChipColumn>
      </Body>

      <BottomBar>
        <Sector>
          <svg width="16" height="9"><path d="M8 0L16 9H0Z" fill="#b5b5b5" /></svg>
          <Text $size={20.5}>半导体</Text>
          <SectorChange>1.00%</SectorChange>
        </Sector>
        <NavItem $w={127}><NavIcon name="order" />下单</NavItem>
        <NavItem $w={126}><NavIcon name="diagnose" />诊股</NavItem>
        <NavItem $w={127}><NavIcon name="remove" />删自选</NavItem>
        <NavItem $w={127}><NavIcon name="more" />功能</NavItem>
      </BottomBar>
    </Page>
  );
};

export default App;
